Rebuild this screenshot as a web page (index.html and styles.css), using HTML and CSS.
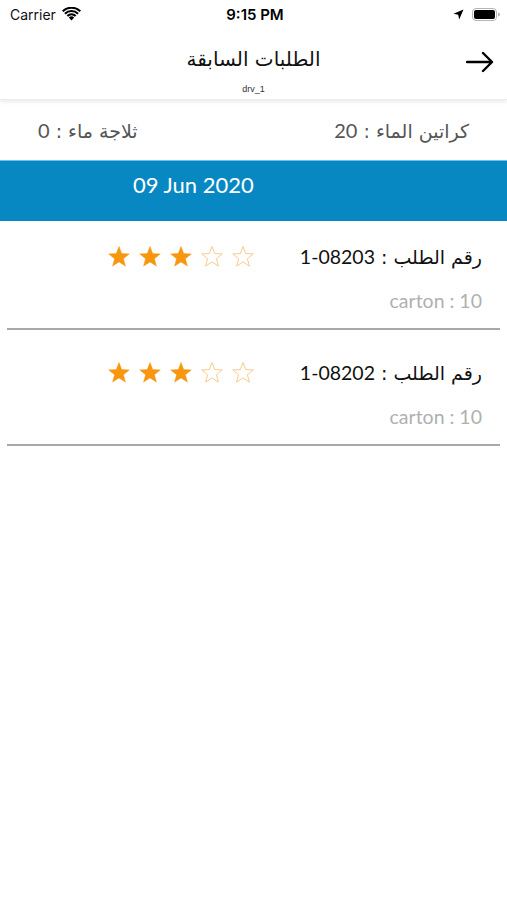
FILE: index.html
```html
<!DOCTYPE html>
<html lang="ar">
<head>
<meta charset="utf-8">
<link rel="stylesheet" href="styles.css">
</head>
<body>
<div class="screen">
  <div class="status">
    <div class="status-left">
      <span class="carrier">Carrier</span>
      <svg class="wifi" width="19" height="14" viewBox="0 0 19 14">
        <path d="M9.5 13.5 L6.8 10.6 A4 4 0 0 1 12.2 10.6 Z" fill="#000"/>
        <path d="M4.6 8.3 A7 7 0 0 1 14.4 8.3 L12.9 9.8 A5 5 0 0 0 6.1 9.8 Z" fill="#000"/>
        <path d="M2.2 5.9 A10.5 10.5 0 0 1 16.8 5.9 L15.3 7.4 A8.3 8.3 0 0 0 3.7 7.4 Z" fill="#000"/>
        <path d="M0 3.6 A13.5 13.5 0 0 1 19 3.6 L17.6 5 A11.5 11.5 0 0 0 1.4 5 Z" fill="#000"/>
      </svg>
    </div>
    <div class="time">9:15 PM</div>
    <div class="status-right">
      <svg class="loc" width="11" height="11" viewBox="0 0 11 11">
        <path d="M10.5 0.5 L0.5 4.8 L5.2 5.8 L6.2 10.5 Z" fill="#000"/>
      </svg>
      <svg class="battery" width="28" height="13" viewBox="0 0 28 13">
        <rect x="0.5" y="0.5" width="24" height="12" rx="3.5" fill="none" stroke="#b5b5b5"/>
        <rect x="2" y="2" width="21" height="9" rx="2" fill="#000"/>
        <path d="M26 4.5 A2 2 0 0 1 26 8.5 Z" fill="#b5b5b5"/>
      </svg>
    </div>
  </div>

  <div class="navbar">
    <div class="nav-titles">
      <div class="nav-title">الطلبات السابقة</div>
      <div class="nav-sub">drv_1</div>
    </div>
    <svg class="back" width="28" height="22" viewBox="0 0 28 22">
      <path d="M1 11 H26 M17 2 L26 11 L17 20" fill="none" stroke="#000" stroke-width="2.4" stroke-linecap="round" stroke-linejoin="round"/>
    </svg>
  </div>

  <div class="summary" dir="rtl">
    <span class="sum-item">كراتين الماء : <span dir="ltr">20</span></span>
    <span class="sum-item">ثلاجة ماء : <span dir="ltr">0</span></span>
  </div>

  <div class="date-band">
    <span class="date-text">09 Jun 2020</span>
  </div>

  <div class="orders">
    <div class="order">
      <div class="order-top">
        <div class="stars">
          <svg class="star" viewBox="0 0 24 24"><path class="full" d="M12 1.5 L14.7 8.6 L22.3 8.9 L16.4 13.7 L18.4 21.1 L12 16.9 L5.6 21.1 L7.6 13.7 L1.7 8.9 L9.3 8.6 Z"/></svg>
          <svg class="star" viewBox="0 0 24 24"><path class="full" d="M12 1.5 L14.7 8.6 L22.3 8.9 L16.4 13.7 L18.4 21.1 L12 16.9 L5.6 21.1 L7.6 13.7 L1.7 8.9 L9.3 8.6 Z"/></svg>
          <svg class="star" viewBox="0 0 24 24"><path class="full" d="M12 1.5 L14.7 8.6 L22.3 8.9 L16.4 13.7 L18.4 21.1 L12 16.9 L5.6 21.1 L7.6 13.7 L1.7 8.9 L9.3 8.6 Z"/></svg>
          <svg class="star" viewBox="0 0 24 24"><path class="empty" d="M12 1.5 L14.7 8.6 L22.3 8.9 L16.4 13.7 L18.4 21.1 L12 16.9 L5.6 21.1 L7.6 13.7 L1.7 8.9 L9.3 8.6 Z"/></svg>
          <svg class="star" viewBox="0 0 24 24"><path class="empty" d="M12 1.5 L14.7 8.6 L22.3 8.9 L16.4 13.7 L18.4 21.1 L12 16.9 L5.6 21.1 L7.6 13.7 L1.7 8.9 L9.3 8.6 Z"/></svg>
        </div>
        <div class="order-title" dir="rtl">رقم الطلب : <span class="num" dir="ltr">1-08203</span></div>
      </div>
      <div class="order-sub">carton : 10</div>
      <div class="sep"></div>
    </div>

    <div class="order">
      <div class="order-top">
        <div class="stars">
          <svg class="star" viewBox="0 0 24 24"><path class="full" d="M12 1.5 L14.7 8.6 L22.3 8.9 L16.4 13.7 L18.4 21.1 L12 16.9 L5.6 21.1 L7.6 13.7 L1.7 8.9 L9.3 8.6 Z"/></svg>
          <svg class="star" viewBox="0 0 24 24"><path class="full" d="M12 1.5 L14.7 8.6 L22.3 8.9 L16.4 13.7 L18.4 21.1 L12 16.9 L5.6 21.1 L7.6 13.7 L1.7 8.9 L9.3 8.6 Z"/></svg>
          <svg class="star" viewBox="0 0 24 24"><path class="full" d="M12 1.5 L14.7 8.6 L22.3 8.9 L16.4 13.7 L18.4 21.1 L12 16.9 L5.6 21.1 L7.6 13.7 L1.7 8.9 L9.3 8.6 Z"/></svg>
          <svg class="star" viewBox="0 0 24 24"><path class="empty" d="M12 1.5 L14.7 8.6 L22.3 8.9 L16.4 13.7 L18.4 21.1 L12 16.9 L5.6 21.1 L7.6 13.7 L1.7 8.9 L9.3 8.6 Z"/></svg>
          <svg class="star" viewBox="0 0 24 24"><path class="empty" d="M12 1.5 L14.7 8.6 L22.3 8.9 L16.4 13.7 L18.4 21.1 L12 16.9 L5.6 21.1 L7.6 13.7 L1.7 8.9 L9.3 8.6 Z"/></svg>
        </div>
        <div class="order-title" dir="rtl">رقم الطلب : <span class="num" dir="ltr">1-08202</span></div>
      </div>
      <div class="order-sub">carton : 10</div>
      <div class="sep"></div>
    </div>
  </div>
</div>
</body>
</html>
```

FILE: styles.css
```css
html, body {
  margin: 0;
  padding: 0;
  background: #fff;
}
.screen {
  width: 507px;
  height: 900px;
  overflow: hidden;
  font-family: "Lato", "DejaVu Sans", sans-serif;
  color: #000;
}
.status {
  height: 28px;
  display: flex;
  align-items: center;
  justify-content: space-between;
  padding: 0 7px 0 10px;
  font-family: "Inter", "Liberation Sans", sans-serif;
}
.status-left {
  display: flex;
  align-items: center;
  gap: 6px;
  width: 120px;
}
.carrier {
  font-size: 14px;
  color: #111;
}
.time {
  font-size: 15px;
  font-weight: 600;
}
.status-right {
  display: flex;
  align-items: center;
  justify-content: flex-end;
  gap: 8px;
  width: 120px;
}
.navbar {
  height: 72px;
  display: flex;
  align-items: flex-start;
  justify-content: center;
  box-shadow: 0 2px 4px rgba(0, 0, 0, 0.08);
  border-bottom: 1px solid #ececec;
  box-sizing: border-box;
  position: relative;
}
.nav-titles {
  display: flex;
  flex-direction: column;
  align-items: center;
}
.nav-title {
  font-family: "DejaVu Sans", sans-serif;
  font-size: 20px;
  line-height: 26px;
  margin-top: 18px;
  color: #111;
}
.nav-sub {
  font-family: "Liberation Sans", sans-serif;
  font-size: 9px;
  line-height: 12px;
  margin-top: 11px;
  color: #333;
}
.back {
  position: absolute;
  right: 13px;
  top: 23px;
}
.summary {
  height: 60px;
  display: flex;
  align-items: center;
  justify-content: space-between;
  padding: 0 38px 0 38px;
  color: #555;
  font-family: "DejaVu Sans", sans-serif;
  font-size: 19px;
}
.summary span[dir="ltr"] {
  font-family: "Lato", sans-serif;
  font-size: 20px;
}
.date-band {
  height: 61px;
  background: #0888c2;
  box-sizing: border-box;
  padding: 11px 0 0 133px;
  border-top: 1px solid #6cc4ec;
}
.date-text {
  color: #fff;
  font-size: 22px;
  line-height: 26px;
}
.order {
  display: flex;
  flex-direction: column;
}
.order-top {
  display: flex;
  align-items: center;
  justify-content: space-between;
  padding: 24px 25px 0 107px;
  height: 24px;
  box-sizing: content-box;
}
.order-title {
  font-family: "DejaVu Sans", sans-serif;
  font-size: 19px;
  line-height: 24px;
  color: #111;
}
.order-title .num {
  font-family: "Lato", sans-serif;
  font-size: 19.5px;
}
.stars {
  display: flex;
  gap: 7px;
  align-items: center;
}
.star {
  width: 24px;
  height: 24px;
}
.star .full {
  fill: #f7960f;
  stroke: #f7960f;
  stroke-width: 0.5;
}
.star .empty {
  fill: none;
  stroke: #f8cb90;
  stroke-width: 1;
}
.order-sub {
  text-align: right;
  padding-right: 25px;
  margin-top: 21px;
  font-size: 19.5px;
  line-height: 22px;
  color: #b0b0b0;
}
.sep {
  height: 2px;
  background: #a8a8a8;
  margin: 16px 7px 7px 7px;
}
```
